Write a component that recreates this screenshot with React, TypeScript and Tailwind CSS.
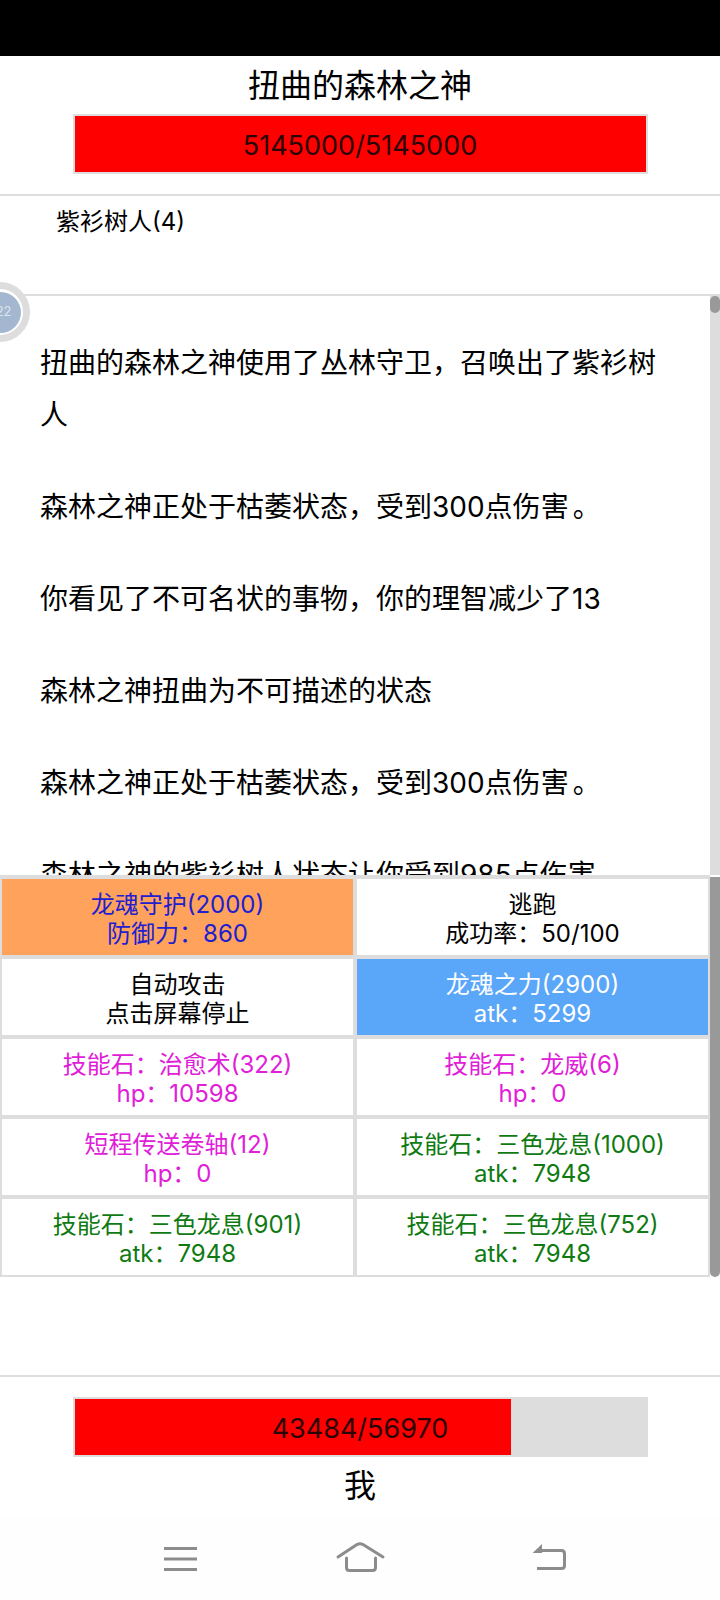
import React from 'react';

const font = { fontFamily: 'Inter, "Noto Sans CJK SC", sans-serif' };

const logLines = [
  '扭曲的森林之神使用了丛林守卫，召唤出了紫衫树人',
  '森林之神正处于枯萎状态，受到300点伤害。',
  '你看见了不可名状的事物，你的理智减少了13',
  '森林之神扭曲为不可描述的状态',
  '森林之神正处于枯萎状态，受到300点伤害。',
  '森林之神的紫衫树人状态让你受到985点伤害',
];

const skills = [
  { name: '龙魂守护(2000)', sub: '防御力：860', cls: 'bg-[#ffa35c] text-[#2020d0]' },
  { name: '逃跑', sub: '成功率：50/100', cls: 'bg-white text-black' },
  { name: '自动攻击', sub: '点击屏幕停止', cls: 'bg-white text-black' },
  { name: '龙魂之力(2900)', sub: 'atk：5299', cls: 'bg-[#5aa6f8] text-white' },
  { name: '技能石：治愈术(322)', sub: 'hp：10598', cls: 'bg-white text-[#e020d8]' },
  { name: '技能石：龙威(6)', sub: 'hp：0', cls: 'bg-white text-[#e020d8]' },
  { name: '短程传送卷轴(12)', sub: 'hp：0', cls: 'bg-white text-[#e020d8]' },
  { name: '技能石：三色龙息(1000)', sub: 'atk：7948', cls: 'bg-white text-[#0f7a12]' },
  { name: '技能石：三色龙息(901)', sub: 'atk：7948', cls: 'bg-white text-[#0f7a12]' },
  { name: '技能石：三色龙息(752)', sub: 'atk：7948', cls: 'bg-white text-[#0f7a12]' },
];

function HpBar({ text, pct }: { text: string; pct: number }) {
  return (
    <div className="relative mx-auto h-[60px] w-[575px] border-2 border-[#dddddd] bg-[#dddddd]">
      <div className="h-full bg-[#ff0000]" style={{ width: `${pct}%` }} />
      <div className="absolute inset-0 flex items-center justify-center pt-[5px] text-[27px] text-[#2a0505]">{text}</div>
    </div>
  );
}

function NavIcons() {
  return (
    <div className="flex h-[82px] shrink-0 items-start bg-[#fefefe]">
      <svg className="ml-[164px] mt-[28px]" width="33" height="26" viewBox="0 0 33 26" fill="none" stroke="#8c8c8c" strokeWidth="3">
        <path d="M0 2.500h33M0 13h33M0 23.500h33" />
      </svg>
      <svg className="ml-[137px] mt-[23px]" width="52" height="32" viewBox="0 0 52 32" fill="none" stroke="#8c8c8c" strokeWidth="3" strokeLinecap="round" strokeLinejoin="round">
        <path d="M4 16 L23 3.500 Q26 1.800 29 3.500 L49 16" />
        <path d="M12.500 17v9.500q0 3 3 3h23q3 0 3-3V17" />
      </svg>
      <svg className="ml-[144px] mt-[24px]" width="40" height="32" viewBox="0 0 40 32" fill="none" stroke="#8c8c8c" strokeWidth="3">
        <path d="M11 8.500h20.500q3 0 3 3v12q0 3-3 3H7" />
        <path d="M12 2v9H2.600z" fill="#8c8c8c" stroke="none" />
      </svg>
    </div>
  );
}

function LogLine({ line }: { line: string }) {
  // the period sits further right in the reference's font
  if (line.endsWith('。')) {
    return (
      <p className="mb-[40px]">
        {line.slice(0, -1)}
        <span className="ml-[4px]">。</span>
      </p>
    );
  }
  return <p className="mb-[40px]">{line}</p>;
}

export default function App() {
  return (
    <div className="relative flex h-[1600px] w-[720px] flex-col overflow-hidden bg-white text-black" style={font}>
      <div className="h-[56px] shrink-0 bg-black" />

      <div className="h-[138px] shrink-0">
        <div className="flex h-[58px] items-center justify-center pt-[2px] text-[32px]">扭曲的森林之神</div>
        <HpBar text="5145000/5145000" pct={100} />
      </div>
      <div className="h-[100px] shrink-0 border-t-2 border-[#dddddd] pl-[56px] pt-[8px] text-[24px] leading-[36px]">紫衫树人(4)</div>

      <div className="flex h-[581px] shrink-0 border-t-2 border-[#dddddd]">
        <div className="flex-1 overflow-hidden px-[40px] pt-[41px] text-[28px] leading-[52px]">
          {logLines.map((line, i) => (
            <LogLine key={i} line={line} />
          ))}
        </div>
        <div className="w-[10px] bg-[#dddddd]">
          <div className="h-[17px] rounded-full bg-[#999999]" />
        </div>
      </div>

      <div className="flex h-[402px] shrink-0">
        <div className="grid flex-1 grid-cols-2 content-start gap-[4px] bg-[#dddddd] px-[2px] pb-[2px] pt-[4px]">
          {skills.map((s, i) => (
            <div key={i} className={`flex h-[76px] flex-col items-center justify-center pt-[4px] text-[24px] leading-[29px] ${s.cls}`}>
              <span>{s.name}</span>
              <span>{s.sub}</span>
            </div>
          ))}
        </div>
        <div className="w-[10px] pt-[2px]">
          <div className="h-full rounded-b-full rounded-t-md bg-[#999999]" />
        </div>
      </div>

      <div className="h-[98px] shrink-0" />

      <div className="h-[143px] shrink-0 border-t-2 border-[#dddddd] pt-[20px]">
        <HpBar text="43484/56970" pct={76.4} />
        <div className="flex h-[58px] items-center justify-center text-[32px]">我</div>
      </div>

      <NavIcons />

      {/* floating ball on the left edge */}
      <div className="absolute left-[-30px] top-[282px] flex h-[60px] w-[60px] items-center justify-center rounded-full border-[7px] border-[#dddddd] bg-white">
        <div className="flex h-[41px] w-[41px] items-center justify-end rounded-full bg-[#a3b8d0] pr-[9px] text-[13px] text-[#dbe4ee]">22</div>
      </div>
    </div>
  );
}
